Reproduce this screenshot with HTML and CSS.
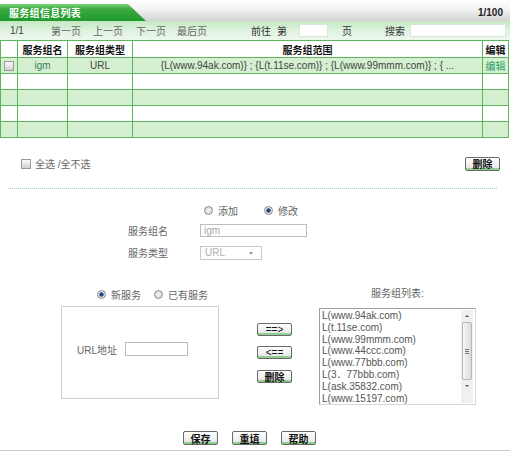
FILE: index.html
```html
<!DOCTYPE html>
<html>
<head>
<meta charset="utf-8">
<link rel="stylesheet" href="styles.css">
</head>
<body>
<div class="page">
  <div class="titlebar">
    <div class="tab"><span class="tab-text">服务组信息列表</span></div>
    <div class="count">1/100</div>
  </div>
  <div class="pager">
    <span class="pg w-total">1/1</span>
    <span class="pg w-first">第一页</span>
    <span class="pg w-prev">上一页</span>
    <span class="pg w-next">下一页</span>
    <span class="pg w-last">最后页</span>
    <span class="pg w-goto">前往</span>
    <span class="pg w-di">第</span>
    <span class="box w-page"></span>
    <span class="pg w-ye">页</span>
    <span class="pg w-search">搜索</span>
    <span class="box w-sbox"></span>
  </div>
  <table class="grid">
    <colgroup>
      <col class="c1"><col class="c2"><col class="c3"><col class="c4"><col class="c5">
    </colgroup>
    <tr class="head">
      <th></th><th>服务组名</th><th>服务组类型</th><th>服务组范围</th><th>编辑</th>
    </tr>
    <tr class="odd">
      <td><span class="chk"></span></td>
      <td class="name">igm</td>
      <td>URL</td>
      <td>{L(www.94ak.com)} ; {L(t.11se.com)} ; {L(www.99mmm.com)} ; { ...</td>
      <td class="edit">编辑</td>
    </tr>
    <tr class="even"><td></td><td></td><td></td><td></td><td></td></tr>
    <tr class="odd"><td></td><td></td><td></td><td></td><td></td></tr>
    <tr class="even"><td></td><td></td><td></td><td></td><td></td></tr>
    <tr class="odd"><td></td><td></td><td></td><td></td><td></td></tr>
  </table>

  <div class="selrow">
    <span class="chk"></span>
    <span class="seltext">全选 /全不选</span>
    <span class="spacer"></span>
    <span class="btn">删除</span>
  </div>
  <div class="dots"></div>

  <div class="mode">
    <span class="radio"></span><span class="rlabel">添加</span>
    <span class="radio on gap"></span><span class="rlabel">修改</span>
  </div>
  <div class="frow">
    <span class="flabel">服务组名</span>
    <span class="finput">igm</span>
  </div>
  <div class="frow">
    <span class="flabel">服务类型</span>
    <span class="fselect">URL<span class="arrow"></span></span>
  </div>

  <div class="lower">
    <div class="leftcol">
      <div class="lhead">
        <span class="radio on"></span><span class="rlabel">新服务</span>
        <span class="radio gap2"></span><span class="rlabel">已有服务</span>
      </div>
      <div class="panel">
        <span class="plabel">URL地址</span>
        <span class="pinput"></span>
      </div>
    </div>
    <div class="midcol">
      <span class="btn b-add">==&gt;</span>
      <span class="btn b-rem">&lt;==</span>
      <span class="btn b-del">删除</span>
    </div>
    <div class="rightcol">
      <div class="rhead">服务组列表:</div>
      <div class="listbox">
        <div class="items">
          <div>L(www.94ak.com)</div>
          <div>L(t.11se.com)</div>
          <div>L(www.99mmm.com)</div>
          <div>L(www.44ccc.com)</div>
          <div>L(www.77bbb.com)</div>
          <div>L(3．77bbb.com)</div>
          <div>L(ask.35832.com)</div>
          <div>L(www.15197.com)</div>
        </div>
        <div class="sbar">
          <span class="sarrow up"></span>
          <span class="thumb"><span class="grip"></span></span>
          <span class="sarrow down"></span>
        </div>
      </div>
    </div>
  </div>

  <div class="actions">
    <span class="btn">保存</span>
    <span class="btn">重填</span>
    <span class="btn">帮助</span>
  </div>
  <div class="bottomline"></div>
</div>
</body>
</html>
```

FILE: styles.css
```css
html, body {
  margin: 0;
  padding: 0;
  background: #ffffff;
}
.page {
  width: 510px;
  height: 451px;
  overflow: hidden;
  font-family: "Liberation Sans", "Noto Sans CJK SC", sans-serif;
  font-size: 10px;
  color: #555;
}

/* title bar */
.titlebar {
  height: 21px;
  display: flex;
  align-items: flex-end;
  background: linear-gradient(#ffffff 0%, #f4f4f4 40%, #d4d4d4 100%);
  position: relative;
}
.tab {
  width: 146px;
  height: 17px;
  background: linear-gradient(#7fd07f 0%, #3aa93f 30%, #1f9a2c 100%);
  clip-path: polygon(0 0, 128px 0, 146px 100%, 0 100%);
  display: flex;
  align-items: center;
}
.tab-text {
  padding-left: 9px;
  color: #fff;
  font-weight: bold;
  font-size: 10px;
  letter-spacing: 0.3px;
}
.count {
  margin-left: auto;
  margin-right: 7px;
  align-self: center;
  font-weight: bold;
  color: #222;
  padding-top: 4px;
}

/* pager */
.pager {
  height: 19px;
  display: flex;
  align-items: center;
  background: linear-gradient(#c4e8c4 0%, #def2de 50%, #eef8ee 100%);
  padding-left: 10px;
  color: #666;
}
.pg { flex: none; }
.w-total { width: 41px; color: #444; }
.w-first { width: 42px; }
.w-prev { width: 43px; }
.w-next { width: 41px; }
.w-last { width: 74px; }
.w-goto { width: 26px; color: #333; }
.w-di { width: 22px; color: #333; }
.w-ye { width: 43px; color: #333; }
.w-search { width: 25px; color: #333; }
.box {
  flex: none;
  height: 13px;
  background: #fff;
  border: 1px solid #d8e8d8;
  box-sizing: border-box;
}
.w-page { width: 29px; margin-right: 14px; }
.w-sbox { width: 96px; }

/* grid */
.grid {
  width: 508px;
  border-collapse: collapse;
  table-layout: fixed;
  border: 1px solid #5db65d;
}
.c1 { width: 17px; }
.c2 { width: 50px; }
.c3 { width: 65px; }
.c4 { width: 350px; }
.c5 { width: 26px; }
.grid th, .grid td {
  border: 1px solid #5db65d;
  padding: 0;
  text-align: center;
  white-space: nowrap;
  overflow: hidden;
}
.grid tr { height: 16px; }
.grid tr.head { height: 17px; background: #fff; }
.grid th {
  font-weight: bold;
  color: #111;
  font-size: 10px;
}
.grid tr.odd { background: #d4f0d0; }
.grid tr.even { background: #ffffff; }
.grid td { color: #444; }
.grid td.name { color: #3b7f60; }
.grid td.edit { color: #2a9a6a; }
.grid .chk { margin: 0 auto; display: block; }

.chk {
  display: inline-block;
  width: 8px;
  height: 8px;
  border: 1px solid #9a9a9a;
  background: linear-gradient(#fafafa, #d0d0d0);
}

/* select row */
.selrow {
  display: flex;
  align-items: center;
  height: 15px;
  margin-top: 18px;
  padding-left: 21px;
  padding-right: 10px;
}
.seltext { margin-left: 4px; color: #666; }
.spacer { flex: 1; }

.btn {
  display: inline-flex;
  align-items: center;
  justify-content: center;
  width: 35px;
  height: 14px;
  box-sizing: border-box;
  border: 1px solid #6a6a6a;
  border-radius: 2px;
  background: linear-gradient(#ffffff, #e4e4e4);
  box-shadow: inset 0 -2px 0 #8fd08f;
  color: #111;
  font-size: 10px;
  font-weight: bold;
}

.dots {
  margin: 17px 13px 0 8px;
  border-top: 1px dotted #a6d8a6;
  height: 0;
}

/* mode form */
.mode {
  display: flex;
  align-items: center;
  height: 14px;
  margin-top: 14px;
  padding-left: 204px;
}
.radio {
  display: inline-block;
  width: 7px;
  height: 7px;
  border-radius: 50%;
  border: 1px solid #8c8c8c;
  background: radial-gradient(circle, #f4f4f4 0%, #d0d0d0 100%);
  flex: none;
}
.radio.on {
  background: radial-gradient(circle, #1e3c78 0, #2a4e8c 1.8px, #e8e8e8 2.6px, #d0d0d0 100%);
}
.rlabel { margin-left: 5px; color: #666; }
.radio.gap { margin-left: 26px; }
.radio.gap2 { margin-left: 13px; }

.frow {
  display: flex;
  align-items: center;
  height: 15px;
  margin-top: 6px;
  padding-left: 128px;
}
.frow + .frow { margin-top: 7px; }
.flabel { width: 72px; color: #666; }
.finput {
  width: 107px;
  height: 13px;
  box-sizing: border-box;
  border: 1px solid #bdbdbd;
  color: #a8a8a8;
  padding-left: 3px;
  line-height: 11px;
}
.fselect {
  width: 62px;
  height: 14px;
  box-sizing: border-box;
  border: 1px solid #c8c8c8;
  color: #b0b0b0;
  padding-left: 4px;
  display: flex;
  align-items: center;
  position: relative;
}
.arrow {
  position: absolute;
  right: 8px;
  top: 5px;
  border-left: 2.5px solid transparent;
  border-right: 2.5px solid transparent;
  border-top: 3px solid #999;
}

/* lower area */
.lower {
  display: flex;
  align-items: flex-start;
  margin-top: 27px;
}
.leftcol {
  margin-left: 61px;
  width: 158px;
}
.lhead {
  height: 14px;
  display: flex;
  align-items: center;
  padding-left: 36px;
}
.panel {
  margin-top: 5px;
  height: 93px;
  box-sizing: border-box;
  border: 1px solid #cfcfcf;
  display: flex;
  align-items: center;
  padding-left: 15px;
  padding-bottom: 7px;
}
.plabel { width: 48px; color: #666; }
.pinput {
  width: 63px;
  height: 14px;
  box-sizing: border-box;
  border: 1px solid #bcbcbc;
}
.midcol {
  margin-left: 38px;
  width: 36px;
  display: flex;
  flex-direction: column;
  padding-top: 36px;
}
.midcol .btn { font-weight: normal; width: 35px; height: 13px; }
.midcol .b-rem { margin-top: 10px; }
.midcol .b-del { margin-top: 11px; font-weight: bold; }
.rightcol {
  margin-left: 26px;
  width: 157px;
}
.rhead {
  height: 14px;
  line-height: 14px;
  text-align: center;
  color: #666;
}
.listbox {
  margin-top: 7px;
  height: 97px;
  box-sizing: border-box;
  border: 1px solid #a0a0a0;
  border-right-color: #d8d8d8;
  border-bottom-color: #d8d8d8;
  display: flex;
  overflow: hidden;
}
.items {
  flex: 1;
  padding: 1px 0 0 2px;
  line-height: 11.8px;
  font-size: 10px;
  color: #555;
  white-space: nowrap;
  overflow: hidden;
}
.sbar {
  width: 12px;
  margin: 1px 2px 1px 0;
  display: flex;
  flex-direction: column;
  align-items: center;
  background: #f0f0f0;
}
.sarrow {
  height: 12px;
  width: 12px;
  position: relative;
  flex: none;
}
.sarrow::after {
  content: "";
  position: absolute;
  left: 4px;
  border-left: 2px solid transparent;
  border-right: 2px solid transparent;
}
.sarrow.up::after { top: 5px; border-bottom: 2px solid #555; }
.sarrow.down::after { top: 5px; border-top: 2px solid #555; }
.thumb {
  width: 10px;
  height: 58px;
  box-sizing: border-box;
  border: 1px solid #b5b5b5;
  border-radius: 2px;
  background: linear-gradient(90deg, #f6f6f6, #dcdcdc);
  display: flex;
  align-items: center;
  justify-content: center;
}
.grip {
  width: 4px;
  height: 5px;
  background: repeating-linear-gradient(#777 0, #777 1px, transparent 1px, transparent 2px);
}

.actions {
  display: flex;
  margin-top: 26px;
  padding-left: 183px;
  gap: 14px;
}
.bottomline {
  margin-top: 5px;
  height: 2px;
  background: #c8c8c8;
}
```
